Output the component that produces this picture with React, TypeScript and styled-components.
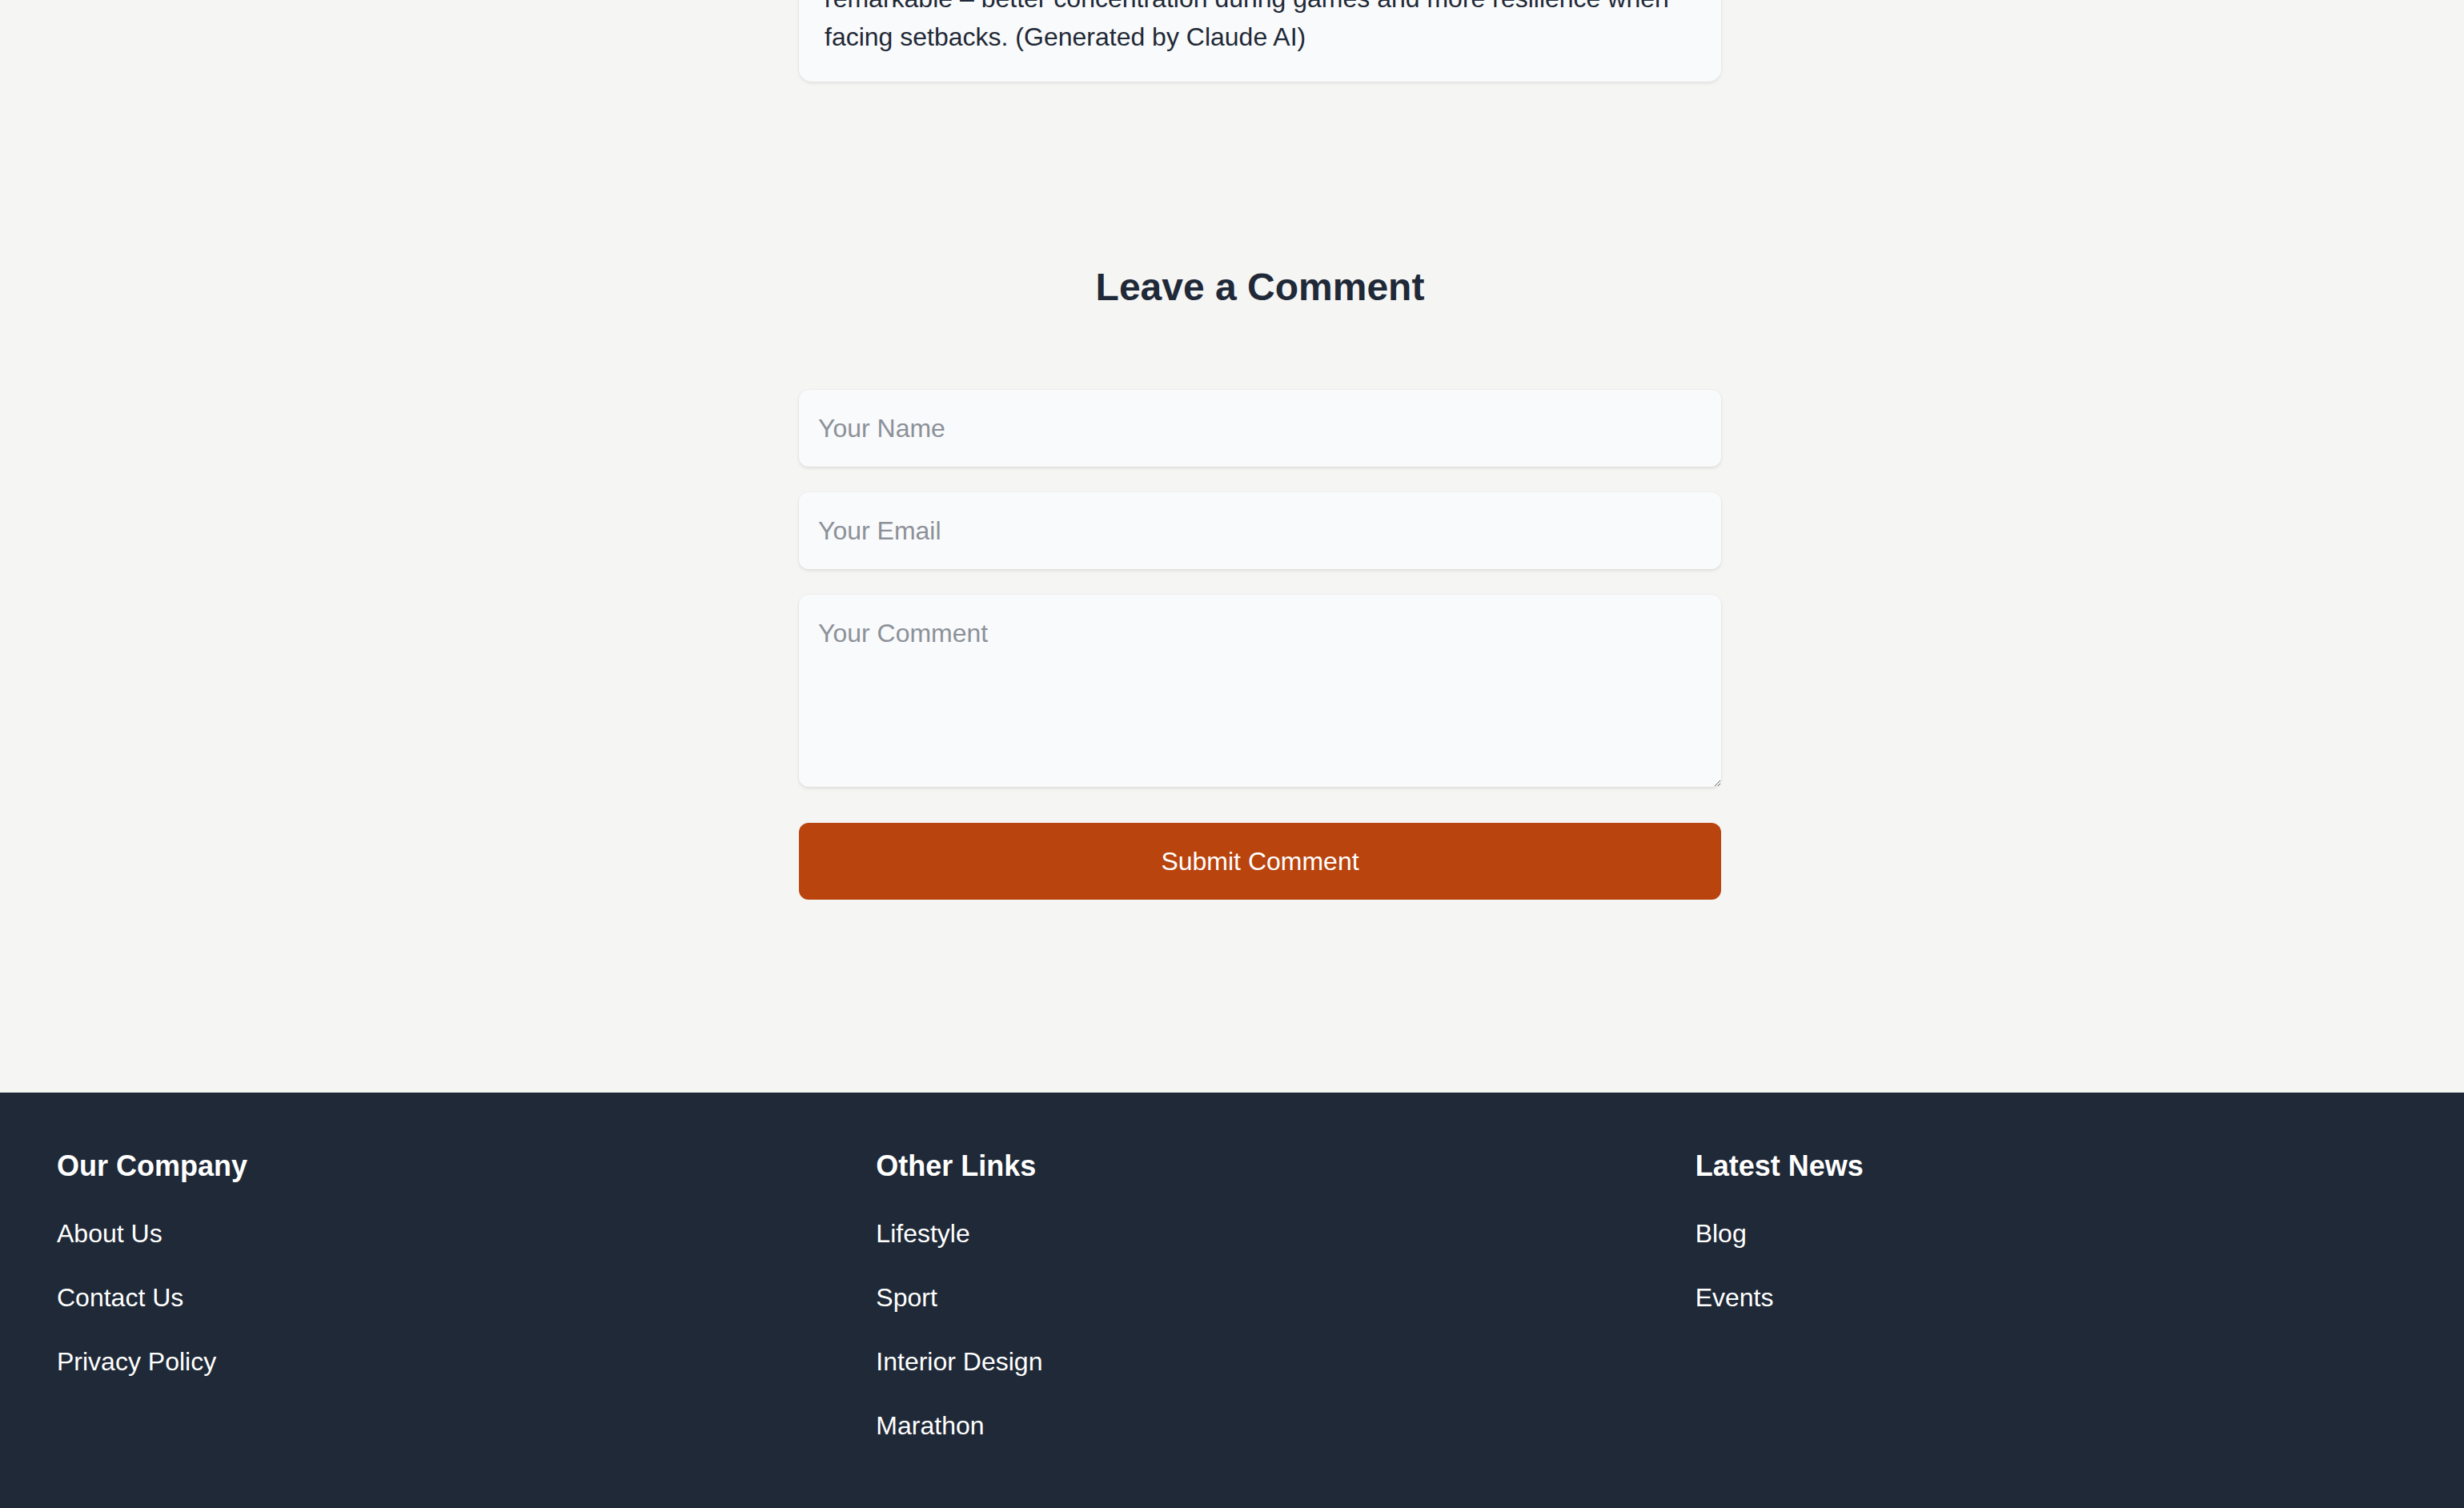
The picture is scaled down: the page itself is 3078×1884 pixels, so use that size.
import React from "react";
import styled, { createGlobalStyle } from "styled-components";

const GlobalStyle = createGlobalStyle`
  html, body {
    margin: 0;
    padding: 0;
    overflow-x: hidden;
    background: #f5f5f4;
    font-family: "Liberation Sans", Arial, sans-serif;
    color: #1f2937;
  }
  * { box-sizing: border-box; }
`;

const Page = styled.div`
  width: 3148px;
  min-height: 1884px;
  display: flex;
  flex-direction: column;
`;

const Main = styled.main`
  display: flex;
  flex-direction: column;
  align-items: center;
`;

const ArticleCard = styled.article`
  width: 1152px;
  margin-top: -58px;
  padding: 32px;
  background: #f9fafb;
  border-radius: 16px;
  box-shadow: 0 2px 4px rgba(0, 0, 0, 0.08), 0 0 0 1px rgba(0, 0, 0, 0.015);
`;

const Paragraph = styled.p`
  margin: 0;
  font-size: 32px;
  line-height: 48px;
  color: #1f2937;
`;

const CommentSection = styled.section`
  width: 1152px;
  margin-top: 225px;
`;

const SectionTitle = styled.h2`
  margin: 0 0 96px;
  font-size: 48px;
  line-height: 64px;
  font-weight: 700;
  text-align: center;
  color: #1f2937;
`;

const Form = styled.form`
  display: flex;
  flex-direction: column;
  gap: 32px;
`;

const fieldStyles = `
  display: block;
  width: 100%;
  padding: 24px;
  border: none;
  border-radius: 12px;
  background: #f9fafb;
  box-shadow: 0 2px 4px rgba(0, 0, 0, 0.09), 0 0 0 1px rgba(0, 0, 0, 0.02);
  font-family: "Liberation Sans", Arial, sans-serif;
  font-size: 32px;
  line-height: 48px;
  color: #1f2937;
  outline: none;
  &::placeholder { color: #8c9199; }
`;

const TextInput = styled.input`
  ${fieldStyles}
  height: 96px;
`;

const TextArea = styled.textarea`
  ${fieldStyles}
  height: 240px;
`;

const SubmitButton = styled.button`
  height: 96px;
  margin-top: 13px;
  border: none;
  border-radius: 12px;
  background: #b9440e;
  color: #ffffff;
  font-family: "Liberation Sans", Arial, sans-serif;
  font-size: 32px;
  line-height: 48px;
  cursor: pointer;
`;

const Footer = styled.footer`
  flex: 1;
  margin-top: 241px;
  padding: 64px 71px;
  background: #1f2937;
  color: #ffffff;
  display: grid;
  grid-template-columns: repeat(3, 1fr);
  gap: 64px;
  align-content: start;
`;

const FooterColumn = styled.div`
  display: flex;
  flex-direction: column;
`;

const FooterTitle = styled.h3`
  margin: 0 0 32px;
  font-size: 36px;
  line-height: 56px;
  font-weight: 700;
  color: #ffffff;
`;

const LinkList = styled.ul`
  margin: 0;
  padding: 0;
  list-style: none;
  display: flex;
  flex-direction: column;
  gap: 32px;
`;

const FooterLink = styled.a`
  display: block;
  font-size: 32px;
  line-height: 48px;
  color: #ffffff;
  text-decoration: none;
`;

const footerColumns = [
  { title: "Our Company", links: ["About Us", "Contact Us", "Privacy Policy"] },
  { title: "Other Links", links: ["Lifestyle", "Sport", "Interior Design", "Marathon"] },
  { title: "Latest News", links: ["Blog", "Events"] },
];

export default function App() {
  return (
    <Page>
      <GlobalStyle />
      <Main>
        <ArticleCard>
          <Paragraph>
            remarkable – better concentration during games and more resilience when facing setbacks. (Generated by Claude AI)
          </Paragraph>
        </ArticleCard>

        <CommentSection>
          <SectionTitle>Leave a Comment</SectionTitle>
          <Form onSubmit={(e) => e.preventDefault()}>
            <TextInput type="text" placeholder="Your Name" />
            <TextInput type="email" placeholder="Your Email" />
            <TextArea rows={4} placeholder="Your Comment" />
            <SubmitButton type="submit">Submit Comment</SubmitButton>
          </Form>
        </CommentSection>
      </Main>

      <Footer>
        {footerColumns.map((col) => (
          <FooterColumn key={col.title}>
            <FooterTitle>{col.title}</FooterTitle>
            <LinkList>
              {col.links.map((link) => (
                <li key={link}>
                  <FooterLink href="#">{link}</FooterLink>
                </li>
              ))}
            </LinkList>
          </FooterColumn>
        ))}
      </Footer>
    </Page>
  );
}
